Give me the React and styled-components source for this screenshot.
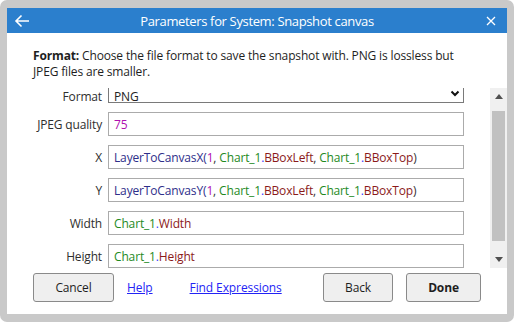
import React, { useLayoutEffect, useRef } from "react";
import styled, { createGlobalStyle } from "styled-components";

const Global = createGlobalStyle`
  html, body { margin: 0; padding: 0; background: #ffffff; }
  * { box-sizing: border-box; }
  body { font-family: "Open Sans", "Noto Sans", sans-serif; }
`;

const Frame = styled.div`
  width: 514px;
  height: 322px;
  padding: 8px 7px 8px 7px;
  background: #c9c9c9;
  border-radius: 7px;
`;

const Window = styled.div`
  height: 306px;
  background: #ffffff;
  display: flex;
  flex-direction: column;
`;

const TitleBar = styled.div`
  height: 25px;
  flex: none;
  background: #2b7fcd;
  color: #ffffff;
  display: grid;
  grid-template-columns: 40px 1fr 40px;
  align-items: center;
`;

const TitleText = styled.div`
  text-align: center;
  font-size: 13px;
  letter-spacing: -0.35px;
  white-space: nowrap;
`;

const IconCell = styled.div`
  display: flex;
  align-items: center;
  justify-content: ${(p) => (p.$end ? "flex-end" : "flex-start")};
  padding: ${(p) => (p.$end ? "0 11px 0 0" : "0 0 0 7px")};
  height: 25px;
`;

const Description = styled.div`
  padding: 15px 26px 0 26px;
  font-size: 12px;
  line-height: 16px;
  color: #1e1e1e;
  letter-spacing: -0.15px;
  flex: none;
`;

const ScrollArea = styled.div`
  margin-top: 8px;
  height: 180px;
  flex: none;
  display: flex;
`;

const ScrollContent = styled.div`
  flex: 1;
  overflow: hidden;
`;

const Rows = styled.div`
  padding: 0 26px 11px 26px;
  display: grid;
  grid-template-columns: 69px 356px;
  column-gap: 6px;
  row-gap: 9px;
  align-items: center;
`;

const Label = styled.div`
  text-align: right;
  font-size: 12px;
  color: #2e2e2e;
  white-space: nowrap;
  letter-spacing: -0.15px;
  ${(p) =>
    p.$low &&
    `
    align-self: end;
    line-height: 10px;
    padding-bottom: 1px;
  `}
`;

const Field = styled.div`
  height: 24px;
  border: 1px solid #ababab;
  padding: 0 5px;
  display: flex;
  align-items: center;
  font-size: 12px;
  white-space: nowrap;
  overflow: hidden;
  letter-spacing: -0.15px;
  color: #222;
`;

const Select = styled(Field)`
  justify-content: space-between;
  align-items: flex-end;
  line-height: 10px;
  border-color: #7a7a7a;
  padding-right: 3px;
  svg {
    align-self: flex-start;
    margin-top: 10px;
  }
`;

const Tok = styled.span`
  white-space: pre;
  color: ${(p) =>
    ({
      fn: "#2e2e8a",
      num: "#b010b0",
      obj: "#1e8a1e",
      dot: "#3c3cff",
      prop: "#8b1a1a",
      punc: "#333333",
    }[p.$k])};
`;

const Scrollbar = styled.div`
  width: 17px;
  flex: none;
  background: #f0f0f0;
  display: flex;
  flex-direction: column;
  align-items: center;
`;

const ArrowBox = styled.div`
  height: 17px;
  width: 17px;
  flex: none;
  display: flex;
  align-items: center;
  justify-content: center;
`;

const Track = styled.div`
  flex: 1;
  width: 100%;
  padding: 6px 2px 10px 2px;
  display: flex;
`;

const Thumb = styled.div`
  width: 100%;
  height: 130px;
  background: #c1c1c1;
`;

const Footer = styled.div`
  flex: 1;
  display: flex;
  align-items: flex-start;
  padding: 5px 26px 0 26px;
`;

const Button = styled.button`
  height: 29px;
  width: ${(p) => p.$w}px;
  margin-left: ${(p) => p.$ml || 0}px;
  background: #efefef;
  border: 1px solid #8a8a8a;
  border-radius: 3px;
  font-family: "Open Sans", "Noto Sans", sans-serif;
  font-size: 12px;
  font-weight: ${(p) => (p.$bold ? 700 : 400)};
  color: #1e1e1e;
  padding: 0;
  letter-spacing: -0.15px;
`;

const LinkText = styled.a`
  margin-left: ${(p) => p.$ml}px;
  line-height: 29px;
  font-size: 12px;
  color: #2323f5;
  text-decoration: underline;
  white-space: nowrap;
  letter-spacing: -0.1px;
`;

const Spacer = styled.div`
  flex: 1;
`;

const Expr = ({ axis }) => (
  <>
    <Tok $k="fn">LayerToCanvas{axis}(</Tok>
    <Tok $k="num">1</Tok>
    <Tok $k="punc">{", "}</Tok>
    <Tok $k="obj">Chart_1</Tok>
    <Tok $k="dot">.</Tok>
    <Tok $k="prop">BBoxLeft</Tok>
    <Tok $k="punc">{", "}</Tok>
    <Tok $k="obj">Chart_1</Tok>
    <Tok $k="dot">.</Tok>
    <Tok $k="prop">BBoxTop</Tok>
    <Tok $k="punc">)</Tok>
  </>
);

export default function App() {
  const ref = useRef(null);
  useLayoutEffect(() => {
    if (ref.current) ref.current.scrollTop = 9;
  }, []);
  return (
    <>
      <Global />
      <Frame>
        <Window>
          <TitleBar>
            <IconCell>
              <svg width="16" height="14" viewBox="0 0 16 14">
                <path d="M15 7H2M7.5 1.5L2 7l5.5 5.5" fill="none" stroke="#fff" strokeWidth="1.6" />
              </svg>
            </IconCell>
            <TitleText>Parameters for System: Snapshot canvas</TitleText>
            <IconCell $end>
              <svg width="10" height="10" viewBox="0 0 10 10">
                <path d="M1 1l8 8M9 1l-8 8" stroke="#fff" strokeWidth="1.3" />
              </svg>
            </IconCell>
          </TitleBar>
          <Description>
            <b>Format:</b> Choose the file format to save the snapshot with. PNG is lossless but
            <br />
            JPEG files are smaller.
          </Description>
          <ScrollArea>
            <ScrollContent ref={ref}>
              <Rows>
                <Label $low>Format</Label>
                <Select>
                  <span>PNG</span>
                  <svg width="10" height="7" viewBox="0 0 10 7">
                    <path d="M1.5 1.5L5 5l3.5-3.5" fill="none" stroke="#111" strokeWidth="2" />
                  </svg>
                </Select>
                <Label>JPEG quality</Label>
                <Field>
                  <Tok $k="num">75</Tok>
                </Field>
                <Label>X</Label>
                <Field>
                  <Expr axis="X" />
                </Field>
                <Label>Y</Label>
                <Field>
                  <Expr axis="Y" />
                </Field>
                <Label>Width</Label>
                <Field>
                  <Tok $k="obj">Chart_1</Tok>
                  <Tok $k="dot">.</Tok>
                  <Tok $k="prop">Width</Tok>
                </Field>
                <Label>Height</Label>
                <Field>
                  <Tok $k="obj">Chart_1</Tok>
                  <Tok $k="dot">.</Tok>
                  <Tok $k="prop">Height</Tok>
                </Field>
              </Rows>
            </ScrollContent>
            <Scrollbar>
              <ArrowBox>
                <svg width="8" height="5" viewBox="0 0 8 5">
                  <path d="M0 5L4 0l4 5z" fill="#505050" />
                </svg>
              </ArrowBox>
              <Track>
                <Thumb />
              </Track>
              <ArrowBox>
                <svg width="8" height="5" viewBox="0 0 8 5">
                  <path d="M0 0h8L4 5z" fill="#505050" />
                </svg>
              </ArrowBox>
            </Scrollbar>
          </ScrollArea>
          <Footer>
            <Button $w={81}>Cancel</Button>
            <LinkText $ml={13}>Help</LinkText>
            <LinkText $ml={37}>Find Expressions</LinkText>
            <Spacer />
            <Button $w={70}>Back</Button>
            <Button $w={75} $ml={13} $bold>
              Done
            </Button>
          </Footer>
        </Window>
      </Frame>
    </>
  );
}
